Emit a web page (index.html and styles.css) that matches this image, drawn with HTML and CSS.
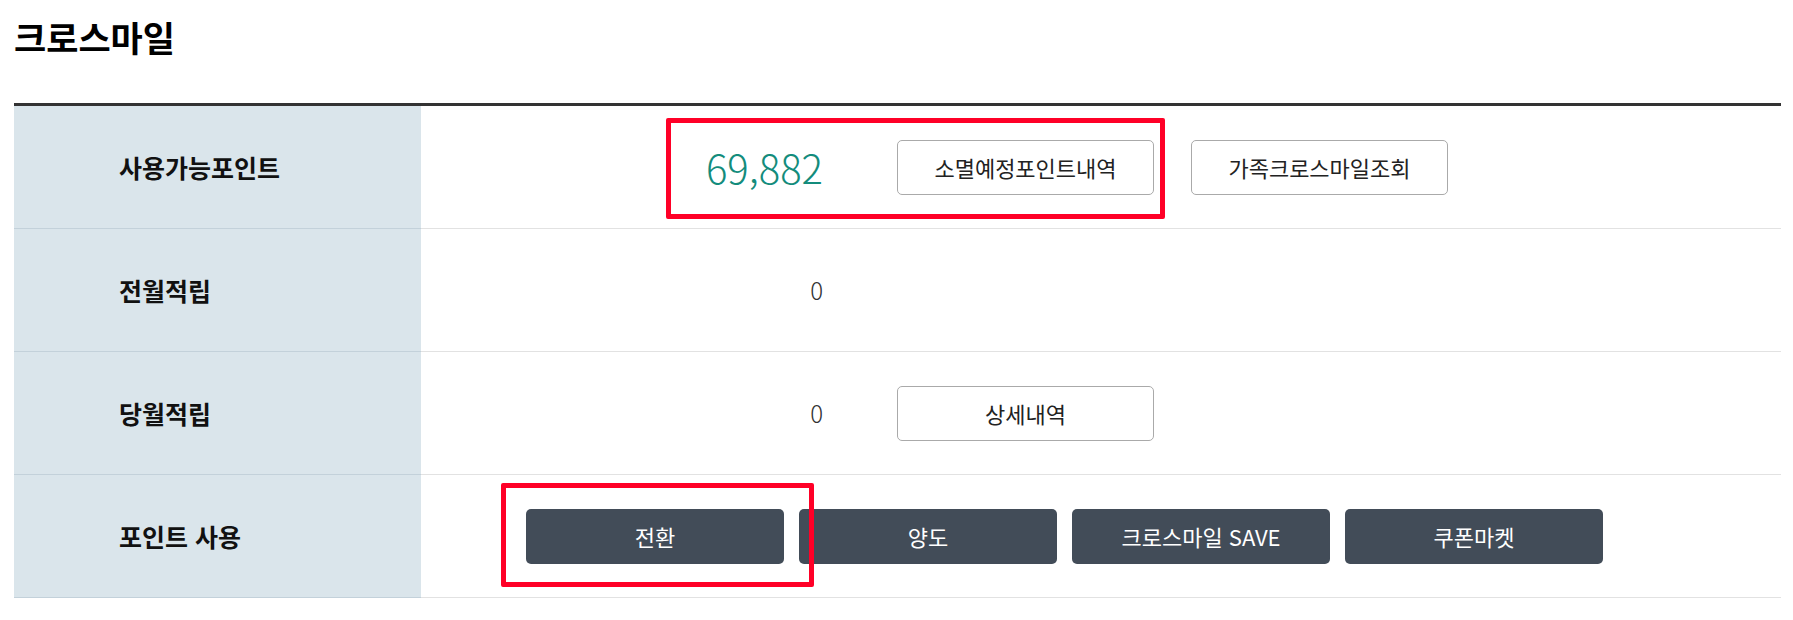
FILE: index.html
```html
<!DOCTYPE html>
<html lang="ko">
<head>
<meta charset="utf-8">
<title>크로스마일</title>
<link rel="stylesheet" href="styles.css">
</head>
<body>
<div class="page">
  <h2 class="title">크로스마일</h2>
  <div class="board">
    <div class="row">
      <div class="th">사용가능포인트</div>
      <div class="td">
        <span class="num big">69,882</span>
        <div class="btns">
          <button class="btn-line">소멸예정포인트내역</button>
          <button class="btn-line">가족크로스마일조회</button>
        </div>
        <span class="mark mark-top"></span>
      </div>
    </div>
    <div class="row">
      <div class="th">전월적립</div>
      <div class="td">
        <span class="num">0</span>
      </div>
    </div>
    <div class="row">
      <div class="th">당월적립</div>
      <div class="td">
        <span class="num">0</span>
        <div class="btns">
          <button class="btn-line">상세내역</button>
        </div>
      </div>
    </div>
    <div class="row">
      <div class="th">포인트 사용</div>
      <div class="td">
        <div class="btns dark">
          <button class="btn-dark">전환</button>
          <button class="btn-dark">양도</button>
          <button class="btn-dark">크로스마일 SAVE</button>
          <button class="btn-dark">쿠폰마켓</button>
        </div>
        <span class="mark mark-bottom"></span>
      </div>
    </div>
  </div>
</div>
</body>
</html>
```
FILE: styles.css
```css
* { box-sizing: border-box; }
html, body {
  margin: 0;
  padding: 0;
  background: #fff;
}
body {
  font-family: "Noto Sans CJK KR", "Noto Sans", sans-serif;
  color: #111;
}
.page {
  padding: 17px 12px 0 14px;
}
.title {
  margin: 0;
  font-size: 35px;
  line-height: 40px;
  font-weight: 700;
  color: #000;
}
.board {
  margin-top: 46px;
  border-top: 3px solid #333;
}
.row {
  display: flex;
  height: 123px;
}
.th {
  width: 407px;
  flex: none;
  background: #dae5eb;
  border-bottom: 1px solid #c3d1da;
  padding-left: 105px;
  display: flex;
  align-items: center;
  font-size: 25px;
  font-weight: 700;
  color: #111;
}
.td {
  flex: 1;
  position: relative;
  border-bottom: 1px solid #e2e2e2;
  padding-left: 105px;
  display: flex;
  align-items: center;
}
.num {
  width: 297px;
  flex: none;
  margin-right: 74px;
  text-align: right;
  font-size: 24px;
  font-weight: 300;
  color: #333;
  line-height: 1;
}
.num.big {
  font-size: 40px;
  color: #138c7c;
}
.btns {
  display: flex;
  gap: 37px;
}
.btns.dark {
  gap: 15px;
}
.btn-line {
  width: 257px;
  height: 55px;
  border: 1px solid #aaa;
  border-radius: 5px;
  background: #fff;
  font-family: inherit;
  font-size: 22px;
  font-weight: 400;
  color: #222;
  padding: 0;
}
.btn-dark {
  width: 258px;
  height: 55px;
  border: 0;
  border-radius: 5px;
  background: #424c58;
  font-family: inherit;
  font-size: 22px;
  font-weight: 400;
  color: #fff;
  padding: 0;
}
.mark {
  position: absolute;
  border: 5px solid #ff0027;
  border-radius: 2px;
  pointer-events: none;
}
.mark-top {
  left: 245px;
  top: 12px;
  width: 499px;
  height: 101px;
}
.mark-bottom {
  left: 80px;
  top: 8px;
  width: 313px;
  height: 104px;
}
```
